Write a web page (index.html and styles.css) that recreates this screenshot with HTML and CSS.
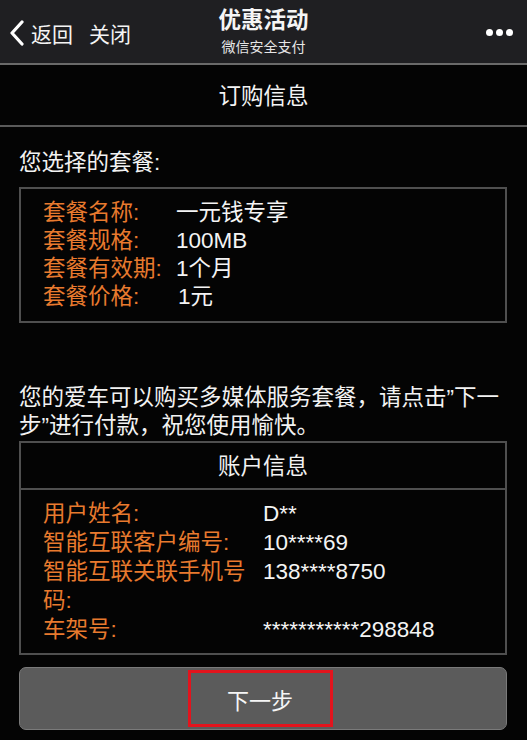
FILE: index.html
```html
<!DOCTYPE html>
<html lang="zh-CN">
<head>
<meta charset="utf-8">
<title>优惠活动</title>
<link rel="stylesheet" href="styles.css">
</head>
<body>
<header class="topbar">
  <div class="nav-left">
    <svg class="back-icon" width="16" height="26" viewBox="0 0 16 26"><path d="M13 2 L3 13 L13 24" fill="none" stroke="#fff" stroke-width="3.2" stroke-linecap="round" stroke-linejoin="round"/></svg>
    <span class="nav-link">返回</span>
    <span class="nav-link close">关闭</span>
  </div>
  <div class="nav-title">
    <div class="title">优惠活动</div>
    <div class="subtitle">微信安全支付</div>
  </div>
  <div class="nav-more"><span class="dot"></span><span class="dot"></span><span class="dot"></span></div>
</header>

<div class="section-bar">订购信息</div>

<main class="content">
  <p class="intro">您选择的套餐:</p>
  <div class="box plan">
    <div class="grid plan-grid">
      <span class="label">套餐名称:</span><span class="value">一元钱专享</span>
      <span class="label">套餐规格:</span><span class="value">100MB</span>
      <span class="label">套餐有效期:</span><span class="value">1个月</span>
      <span class="label">套餐价格:</span><span class="value nudge">1元</span>
    </div>
  </div>

  <p class="notice">您的爱车可以购买多媒体服务套餐，请点击”下一步”进行付款，祝您使用愉快。</p>

  <div class="box account">
    <div class="box-title">账户信息</div>
    <div class="grid account-grid">
      <span class="label">用户姓名:</span><span class="value">D**</span>
      <span class="label">智能互联客户编号:</span><span class="value">10****69</span>
      <span class="label">智能互联关联手机号码:</span><span class="value">138****8750</span>
      <span class="label">车架号:</span><span class="value">***********298848</span>
    </div>
  </div>

  <button class="next-btn" type="button"><span class="next-mark">下一步</span></button>
</main>
</body>
</html>
```

FILE: styles.css
```css
* { box-sizing: border-box; }

html, body {
  margin: 0;
  padding: 0;
  background: #040404;
  color: #f2f2f2;
  font-family: "Liberation Sans", "Noto Sans CJK SC", Arial, sans-serif;
}

.topbar {
  height: 65px;
  background: #1f1f22;
  border-bottom: 2px solid #6a6a6a;
  display: flex;
  align-items: center;
  justify-content: space-between;
  padding: 0 14px 0 9px;
  position: relative;
}

.nav-left {
  display: flex;
  align-items: center;
  font-size: 21px;
  color: #f4f4f4;
  padding-top: 2px;
}

.back-icon { margin-right: 6px; }

.nav-link.close { margin-left: 16px; }

.nav-title {
  position: absolute;
  left: 0;
  right: 0;
  top: 0;
  text-align: center;
  pointer-events: none;
}

.title {
  font-size: 22.5px;
  font-weight: 700;
  line-height: 26px;
  margin-top: 8px;
  color: #f5f5f5;
}

.subtitle {
  font-size: 14px;
  line-height: 18px;
  margin-top: 4px;
  color: #e6e6e6;
}

.nav-more {
  display: flex;
  gap: 3px;
  padding-top: 1px;
}

.dot {
  width: 7px;
  height: 7px;
  border-radius: 50%;
  background: #fff;
}

.section-bar {
  height: 62px;
  border-bottom: 2px solid #5a5a5a;
  display: flex;
  align-items: center;
  justify-content: center;
  font-size: 22.5px;
  color: #f4f4f4;
  padding-bottom: 2px;
}

.content {
  padding: 0 20px 0 19px;
}

.intro {
  margin: 22px 0 0;
  font-size: 22.5px;
  line-height: 28px;
}

.box {
  border: 2px solid #4f4f4f;
}

.plan {
  margin-top: 10px;
  padding: 10px 22px;
}

.grid {
  display: grid;
  font-size: 22.5px;
}

.plan-grid {
  grid-template-columns: 133px 1fr;
  line-height: 28px;
}

.label { color: #e87a2e; }
.value { color: #f4f4f4; }
.value.nudge { padding-left: 2px; }

.notice {
  margin: 61px 0 0;
  font-size: 22.5px;
  line-height: 28px;
}

.account { margin-top: 1px; }

.box-title {
  height: 47px;
  display: flex;
  align-items: center;
  justify-content: center;
  font-size: 22.5px;
  border-bottom: 2px solid #4f4f4f;
  padding-bottom: 4px;
}

.account-grid {
  grid-template-columns: 220px 1fr;
  line-height: 29px;
  padding: 9px 22px 9px 22px;
}

.next-btn {
  display: flex;
  width: 100%;
  height: 63px;
  margin-top: 12px;
  align-items: center;
  justify-content: center;
  background: #5b5b5b;
  border: 1px solid #7a7a7a;
  border-radius: 7px;
  padding: 0;
  font-family: inherit;
  cursor: pointer;
}

.next-mark {
  display: flex;
  align-items: center;
  justify-content: center;
  width: 145px;
  height: 57px;
  margin-right: 6px;
  border: 3px solid #e3141d;
  font-size: 22px;
  color: #f6f6f6;
}
```
